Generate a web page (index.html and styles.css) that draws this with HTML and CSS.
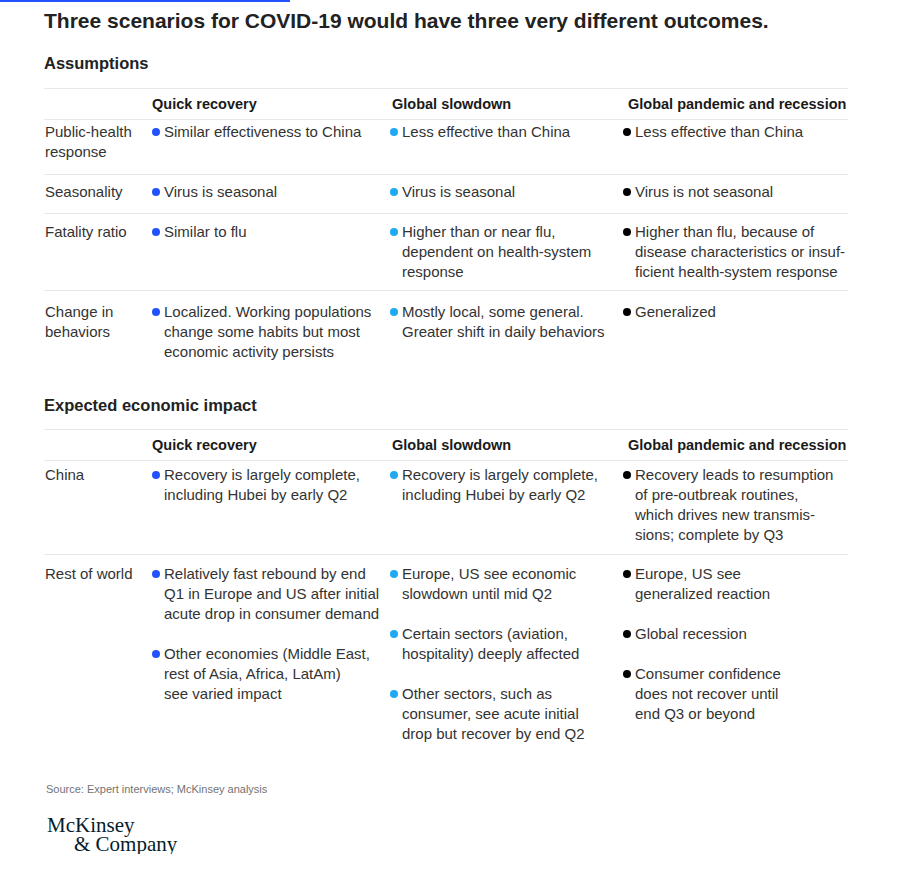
FILE: index.html
```html
<!DOCTYPE html>
<html lang="en">
<head>
<meta charset="utf-8">
<title>Three scenarios for COVID-19</title>
<link rel="stylesheet" href="styles.css">
</head>
<body>
<div class="topline"></div>
<main class="page">
  <h1 class="title">Three scenarios for COVID-19 would have three very different outcomes.</h1>

  <h2 class="section first">Assumptions</h2>
  <div class="table">
    <div class="row head">
      <div class="cell"></div>
      <div class="th th1">Quick recovery</div>
      <div class="th th2">Global slowdown</div>
      <div class="th th3">Global pandemic and recession</div>
    </div>
    <div class="row r-ph">
      <div class="label">Public-health<br>response</div>
      <div class="cell"><div class="item"><span class="dot blue"></span><span class="txt">Similar effectiveness to China</span></div></div>
      <div class="cell"><div class="item"><span class="dot cyan"></span><span class="txt">Less effective than China</span></div></div>
      <div class="cell"><div class="item"><span class="dot black"></span><span class="txt">Less effective than China</span></div></div>
    </div>
    <div class="row r-sea">
      <div class="label">Seasonality</div>
      <div class="cell"><div class="item"><span class="dot blue"></span><span class="txt">Virus is seasonal</span></div></div>
      <div class="cell"><div class="item"><span class="dot cyan"></span><span class="txt">Virus is seasonal</span></div></div>
      <div class="cell"><div class="item"><span class="dot black"></span><span class="txt">Virus is not seasonal</span></div></div>
    </div>
    <div class="row r-fat">
      <div class="label">Fatality ratio</div>
      <div class="cell"><div class="item"><span class="dot blue"></span><span class="txt">Similar to flu</span></div></div>
      <div class="cell"><div class="item"><span class="dot cyan"></span><span class="txt">Higher than or near flu,<br>dependent on health-system<br>response</span></div></div>
      <div class="cell"><div class="item"><span class="dot black"></span><span class="txt">Higher than flu, because of<br>disease characteristics or insuf-<br>ficient health-system response</span></div></div>
    </div>
    <div class="row r-chg last">
      <div class="label">Change in<br>behaviors</div>
      <div class="cell"><div class="item"><span class="dot blue"></span><span class="txt">Localized. Working populations<br>change some habits but most<br>economic activity persists</span></div></div>
      <div class="cell"><div class="item"><span class="dot cyan"></span><span class="txt">Mostly local, some general.<br>Greater shift in daily behaviors</span></div></div>
      <div class="cell"><div class="item"><span class="dot black"></span><span class="txt">Generalized</span></div></div>
    </div>
  </div>

  <h2 class="section second">Expected economic impact</h2>
  <div class="table">
    <div class="row head">
      <div class="cell"></div>
      <div class="th th1">Quick recovery</div>
      <div class="th th2">Global slowdown</div>
      <div class="th th3">Global pandemic and recession</div>
    </div>
    <div class="row r-china">
      <div class="label">China</div>
      <div class="cell"><div class="item"><span class="dot blue"></span><span class="txt">Recovery is largely complete,<br>including Hubei by early Q2</span></div></div>
      <div class="cell"><div class="item"><span class="dot cyan"></span><span class="txt">Recovery is largely complete,<br>including Hubei by early Q2</span></div></div>
      <div class="cell"><div class="item"><span class="dot black"></span><span class="txt">Recovery leads to resumption<br>of pre-outbreak routines,<br>which drives new transmis-<br>sions; complete by Q3</span></div></div>
    </div>
    <div class="row r-rest last">
      <div class="label">Rest of world</div>
      <div class="cell">
        <div class="item"><span class="dot blue"></span><span class="txt">Relatively fast rebound by end<br>Q1 in Europe and US after initial<br>acute drop in consumer demand</span></div>
        <div class="item"><span class="dot blue"></span><span class="txt">Other economies (Middle East,<br>rest of Asia, Africa, LatAm)<br>see varied impact</span></div>
      </div>
      <div class="cell">
        <div class="item"><span class="dot cyan"></span><span class="txt">Europe, US see economic<br>slowdown until mid Q2</span></div>
        <div class="item"><span class="dot cyan"></span><span class="txt">Certain sectors (aviation,<br>hospitality) deeply affected</span></div>
        <div class="item"><span class="dot cyan"></span><span class="txt">Other sectors, such as<br>consumer, see acute initial<br>drop but recover by end Q2</span></div>
      </div>
      <div class="cell">
        <div class="item"><span class="dot black"></span><span class="txt">Europe, US see<br>generalized reaction</span></div>
        <div class="item"><span class="dot black"></span><span class="txt">Global recession</span></div>
        <div class="item"><span class="dot black"></span><span class="txt">Consumer confidence<br>does not recover until<br>end Q3 or beyond</span></div>
      </div>
    </div>
  </div>

  <p class="source">Source: Expert interviews; McKinsey analysis</p>

  <div class="logo">McKinsey &amp;&nbsp;Company</div>
</main>
</body>
</html>
```

FILE: styles.css
```css
html, body {
  margin: 0;
  padding: 0;
  background: #ffffff;
}

body {
  font-family: "Liberation Sans", Arial, sans-serif;
  color: #333333;
}

.topline {
  width: 290px;
  height: 2px;
  background: #2251ff;
}

.page {
  padding-left: 44px;
  width: 804px;
}

.title {
  margin: 5px 0 0 0;
  font-size: 21px;
  line-height: 28px;
  font-weight: 700;
  color: #222222;
  white-space: nowrap;
}

.section {
  margin: 0;
  font-size: 16.5px;
  line-height: 22px;
  font-weight: 700;
  color: #222222;
}

.section.first {
  margin-top: 17px;
  margin-bottom: 14px;
}

.section.second {
  margin-top: 32px;
  margin-bottom: 13px;
}

.table {
  border-top: 1px solid #e8e8e8;
}

.row {
  display: grid;
  grid-template-columns: 107px 238px 233px 226px;
  border-bottom: 1px solid #e8e8e8;
  font-size: 15px;
  line-height: 20px;
  white-space: nowrap;
}

.row.last {
  border-bottom: none;
}

.row.head {
  padding: 5px 0;
  font-size: 14.5px;
  font-weight: 700;
  color: #1a1a1a;
}

.th1 { padding-left: 1px; }
.th2 { padding-left: 3px; }
.th3 { padding-left: 6px; }

.r-ph { padding: 2px 0 12px; }
.r-sea { padding: 7px 0 11px; }
.r-fat { padding: 8px 0 8px; }
.r-chg { padding: 11px 0 0; }
.r-china { padding: 4px 0 9px; }
.r-rest { padding: 9px 0 0; }

.label {
  padding-left: 1px;
  color: #333333;
}

.item {
  display: flex;
  align-items: flex-start;
  gap: 4px;
}

.item + .item {
  margin-top: 20px;
}

.dot {
  flex: none;
  width: 8px;
  height: 8px;
  margin: 6px 0 0 1px;
  border-radius: 50%;
}

.dot.blue { background: #2251ff; }
.dot.cyan { background: #1ea9f2; }
.dot.black { background: #000000; }

.txt {
  color: #333333;
}

.source {
  margin: 38px 0 0 2px;
  font-size: 11px;
  line-height: 14px;
  color: #737373;
}

/* Hanging indent: "McKinsey" on the first line, "& Company" indented below */
.logo {
  margin: 20px 0 0 3px;
  width: 70px;
  padding-left: 27px;
  text-indent: -27px;
  font-family: "Liberation Serif", "Times New Roman", serif;
  font-size: 21px;
  line-height: 19px;
  color: #051c2c;
}
```
